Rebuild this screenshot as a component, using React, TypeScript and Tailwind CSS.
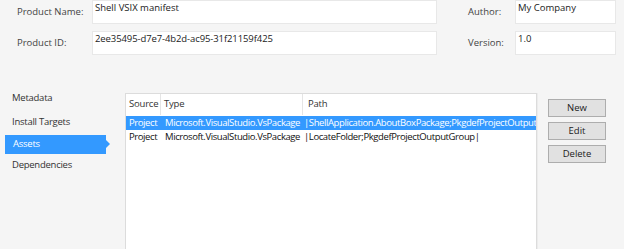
import React from "react";

const font = { fontFamily: "'Open Sans', 'Noto Sans', sans-serif" };

export default function App() {
  const rows = [
    { src: "Project", type: "Microsoft.VisualStudio.VsPackage", path: "|ShellApplication.AboutBoxPackage;PkgdefProjectOutputGroup|", sel: true },
    { src: "Project", type: "Microsoft.VisualStudio.VsPackage", path: "|LocateFolder;PkgdefProjectOutputGroup|", sel: false },
  ];
  return (
    <div className="w-[624px] h-[249px] bg-[#f5f5f5] overflow-hidden text-[9.5px]" style={font}>
      <div className="flex pl-[17px]">
        <div className="flex flex-col gap-[7px]">
          <div className="flex items-center">
            <div className="w-[75px] text-[#444]">Product Name:</div>
            <div className="w-[345px] h-[24px] bg-white border border-[#e8e8e8] px-[2px] text-[#222] leading-[13px]">Shell VSIX manifest</div>
          </div>
          <div className="flex items-center">
            <div className="w-[75px] text-[#444]">Product ID:</div>
            <div className="w-[345px] h-[24px] bg-white border border-[#e8e8e8] px-[2px] text-[#222] leading-[13px] tracking-[-0.1px]">2ee35495-d7e7-4b2d-ac95-31f21159f425</div>
          </div>
        </div>
        <div className="flex flex-col gap-[7px] ml-[31px]">
          <div className="flex items-center">
            <div className="w-[47px] text-[#444]">Author:</div>
            <div className="w-[101px] h-[24px] bg-white border border-[#e8e8e8] px-[2px] text-[#222] leading-[13px]">My Company</div>
          </div>
          <div className="flex items-center">
            <div className="w-[47px] text-[#444]">Version:</div>
            <div className="w-[101px] h-[24px] bg-white border border-[#e8e8e8] px-[2px] text-[#222] leading-[13px]">1.0</div>
          </div>
        </div>
      </div>

      <div className="flex mt-[31px] tracking-[-0.25px]">
        <div className="w-[121px] flex flex-col pt-[1px] text-[#333]">
          <div className="h-[22px] flex items-center pl-[12px]">Metadata</div>
          <div className="h-[22px] flex items-center pl-[12px] mt-[2px]">Install Targets</div>
          <div className="relative h-[19px] flex items-center pl-[8px] ml-[5px] w-[101px] bg-[#3399ff] text-white mt-[2px]">
            Assets
            <div className="absolute right-[-4px] top-[5px] w-0 h-0 border-t-[4px] border-b-[4px] border-l-[4px] border-t-transparent border-b-transparent border-l-[#3399ff]" />
          </div>
          <div className="h-[22px] flex items-center pl-[12px]">Dependencies</div>
        </div>

        <div className="ml-[4px] mt-[7px] w-[412px] h-[200px] bg-white border border-[#dcdcdc] shadow-[1px_0_0_#ececec] overflow-hidden tracking-[-0.4px]">
          <div className="flex h-[21px] items-center text-[#333] tracking-[-0.2px]">
            <div className="w-[35px] h-full flex items-center pl-[3px] border-r border-[#e5e5e5]">Source</div>
            <div className="w-[142px] h-full flex items-center pl-[3px] border-r border-[#e5e5e5]">Type</div>
            <div className="flex-1 h-full flex items-center pl-[5px]">Path</div>
          </div>
          <div className="mt-[1px]">
            {rows.map((r, i) => (
              <div key={i} className={`flex h-[14px] items-center whitespace-nowrap ${r.sel ? "bg-[#3399ff] text-white" : "text-[#111]"}`}>
                <div className="w-[36px] pl-[3px] shrink-0">{r.src}</div>
                <div className="w-[141px] pl-[3px] shrink-0">{r.type}</div>
                <div className="pl-[1px] shrink-0">{r.path}</div>
              </div>
            ))}
          </div>
        </div>

        <div className="ml-[11px] mt-[13px] flex flex-col gap-[5px] tracking-normal">
          {["New", "Edit", "Delete"].map((b) => (
            <div key={b} className="w-[58px] h-[18px] bg-[#e1e1e1] border border-[#adadad] flex items-center justify-center text-[#222]">{b}</div>
          ))}
        </div>
      </div>
    </div>
  );
}
